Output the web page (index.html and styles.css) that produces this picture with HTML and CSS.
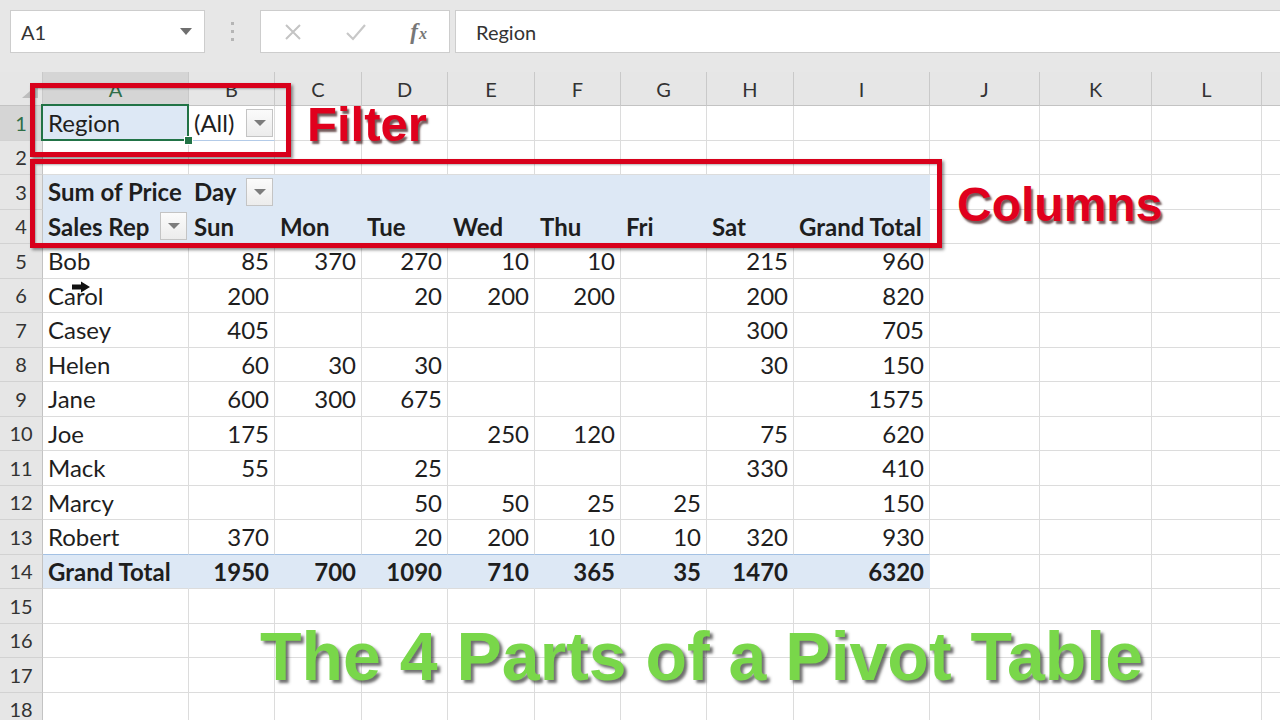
FILE: index.html
```html
<!DOCTYPE html>
<html lang="en">
<head>
<meta charset="utf-8">
<title>The 4 Parts of a Pivot Table</title>
<link rel="stylesheet" href="styles.css">
</head>
<body>
<div class="app">
  <div class="topbar">
    <div class="namebox"><span class="nb-text">A1</span><span class="caret"></span></div>
    <div class="grip"><span></span><span></span><span></span></div>
    <div class="fxbox">
      <svg class="ico" width="18" height="18" viewBox="0 0 18 18"><path d="M2 2 L16 16 M16 2 L2 16" stroke="#c4c4c4" stroke-width="2" fill="none"/></svg>
      <svg class="ico" width="22" height="18" viewBox="0 0 22 18"><path d="M2 10 L8 16 L20 2" stroke="#c8c8c8" stroke-width="2.2" fill="none"/></svg>
      <span class="fx"><i>f</i><i class="x">x</i></span>
    </div>
    <div class="formula">Region</div>
  </div>

  <div class="sheet">
    <table class="grid">
      <colgroup>
        <col class="c-rh"><col class="c-a"><col class="c-86"><col class="c-87"><col class="c-86"><col class="c-87"><col class="c-86"><col class="c-86"><col class="c-87"><col class="c-i"><col class="c-j"><col class="c-k"><col class="c-l"><col class="c-m">
      </colgroup>
      <tr class="hdr">
        <th class="corner"><svg class="selall" width="22" height="16" viewBox="0 0 22 16"><polygon points="20,1 20,15 4,15" fill="#bdbdbd"/></svg></th>
        <th class="ch sh">A</th><th class="ch">B</th><th class="ch">C</th><th class="ch">D</th><th class="ch">E</th><th class="ch">F</th><th class="ch">G</th><th class="ch">H</th><th class="ch">I</th><th class="ch">J</th><th class="ch">K</th><th class="ch">L</th><th class="ch"></th>
      </tr>
      <tr>
        <th class="rh sh">1</th>
        <td class="a1">Region<div class="sel"><span class="handle"></span></div></td>
        <td class="bline btn"><div class="cf"><span>(All)</span><span class="dd"></span></div></td>
        <td></td><td></td><td></td><td></td><td></td><td></td><td></td><td></td><td></td><td></td><td></td>
      </tr>
      <tr>
        <th class="rh">2</th>
        <td></td><td></td><td></td><td></td><td></td><td></td><td></td><td></td><td></td><td></td><td></td><td></td><td></td>
      </tr>
      <tr>
        <th class="rh">3</th>
        <td class="pv b">Sum of Price</td>
        <td class="pv b btn"><div class="cf"><span>Day</span><span class="dd"></span></div></td>
        <td class="pv"></td><td class="pv"></td><td class="pv"></td><td class="pv"></td><td class="pv"></td><td class="pv"></td><td class="pv"></td>
        <td></td><td></td><td></td><td></td>
      </tr>
      <tr>
        <th class="rh">4</th>
        <td class="pv pv4 b btn"><div class="cf"><span>Sales Rep</span><span class="dd"></span></div></td>
        <td class="pv pv4 b">Sun</td><td class="pv pv4 b">Mon</td><td class="pv pv4 b">Tue</td><td class="pv pv4 b">Wed</td><td class="pv pv4 b">Thu</td><td class="pv pv4 b">Fri</td><td class="pv pv4 b">Sat</td><td class="pv pv4 b">Grand Total</td>
        <td></td><td></td><td></td><td></td>
      </tr>
      <tr>
        <th class="rh">5</th>
        <td>Bob</td><td class="n">85</td><td class="n">370</td><td class="n">270</td><td class="n">10</td><td class="n">10</td><td class="n"></td><td class="n">215</td><td class="n">960</td>
        <td></td><td></td><td></td><td></td>
      </tr>
      <tr>
        <th class="rh">6</th>
        <td>Carol</td><td class="n">200</td><td class="n"></td><td class="n">20</td><td class="n">200</td><td class="n">200</td><td class="n"></td><td class="n">200</td><td class="n">820</td>
        <td></td><td></td><td></td><td></td>
      </tr>
      <tr>
        <th class="rh">7</th>
        <td>Casey</td><td class="n">405</td><td class="n"></td><td class="n"></td><td class="n"></td><td class="n"></td><td class="n"></td><td class="n">300</td><td class="n">705</td>
        <td></td><td></td><td></td><td></td>
      </tr>
      <tr>
        <th class="rh">8</th>
        <td>Helen</td><td class="n">60</td><td class="n">30</td><td class="n">30</td><td class="n"></td><td class="n"></td><td class="n"></td><td class="n">30</td><td class="n">150</td>
        <td></td><td></td><td></td><td></td>
      </tr>
      <tr>
        <th class="rh">9</th>
        <td>Jane</td><td class="n">600</td><td class="n">300</td><td class="n">675</td><td class="n"></td><td class="n"></td><td class="n"></td><td class="n"></td><td class="n">1575</td>
        <td></td><td></td><td></td><td></td>
      </tr>
      <tr>
        <th class="rh">10</th>
        <td>Joe</td><td class="n">175</td><td class="n"></td><td class="n"></td><td class="n">250</td><td class="n">120</td><td class="n"></td><td class="n">75</td><td class="n">620</td>
        <td></td><td></td><td></td><td></td>
      </tr>
      <tr>
        <th class="rh">11</th>
        <td>Mack</td><td class="n">55</td><td class="n"></td><td class="n">25</td><td class="n"></td><td class="n"></td><td class="n"></td><td class="n">330</td><td class="n">410</td>
        <td></td><td></td><td></td><td></td>
      </tr>
      <tr>
        <th class="rh">12</th>
        <td>Marcy</td><td class="n"></td><td class="n"></td><td class="n">50</td><td class="n">50</td><td class="n">25</td><td class="n">25</td><td class="n"></td><td class="n">150</td>
        <td></td><td></td><td></td><td></td>
      </tr>
      <tr>
        <th class="rh">13</th>
        <td class="r13">Robert</td><td class="n r13">370</td><td class="n r13"></td><td class="n r13">20</td><td class="n r13">200</td><td class="n r13">10</td><td class="n r13">10</td><td class="n r13">320</td><td class="n r13">930</td>
        <td></td><td></td><td></td><td></td>
      </tr>
      <tr>
        <th class="rh">14</th>
        <td class="pvt">Grand Total</td><td class="pvt n">1950</td><td class="pvt n">700</td><td class="pvt n">1090</td><td class="pvt n">710</td><td class="pvt n">365</td><td class="pvt n">35</td><td class="pvt n">1470</td><td class="pvt n">6320</td>
        <td></td><td></td><td></td><td></td>
      </tr>
      <tr>
        <th class="rh">15</th>
        <td></td><td></td><td></td><td></td><td></td><td></td><td></td><td></td><td></td><td></td><td></td><td></td><td></td>
      </tr>
      <tr>
        <th class="rh">16</th>
        <td></td><td></td><td></td><td></td><td></td><td></td><td></td><td></td><td></td><td></td><td></td><td></td><td></td>
      </tr>
      <tr>
        <th class="rh">17</th>
        <td></td><td></td><td></td><td></td><td></td><td></td><td></td><td></td><td></td><td></td><td></td><td></td><td></td>
      </tr>
      <tr>
        <th class="rh">18</th>
        <td></td><td></td><td></td><td></td><td></td><td></td><td></td><td></td><td></td><td></td><td></td><td></td><td></td>
      </tr>
    </table>
  </div>

  <div class="box box-filter"></div>
  <div class="box box-columns"></div>
  <div class="label label-filter">Filter</div>
  <div class="label label-columns">Columns</div>
  <div class="title">The 4 Parts of a Pivot Table</div>
  <svg class="cursor" width="20" height="12" viewBox="0 0 20 12"><path d="M1 3.5 H10 V0.5 L19 6 L10 11.5 V8.5 H1 Z" fill="#111"/></svg>
</div>
</body>
</html>
```

FILE: styles.css
```css
* { box-sizing: border-box; }
html, body { margin: 0; padding: 0; }
body {
  width: 1280px;
  height: 720px;
  overflow: hidden;
  background: #ffffff;
  font-family: "Lato", "Liberation Sans", sans-serif;
  color: #1e1e1e;
}
.app { position: relative; width: 1280px; height: 720px; overflow: hidden; }

/* ---------- formula bar ---------- */
.topbar {
  height: 72px;
  background: #e7e7e7;
  display: flex;
  align-items: flex-start;
  padding: 10px 0 0 10px;
}
.namebox {
  width: 195px;
  height: 43px;
  background: #fff;
  border: 1px solid #cdcdcd;
  display: flex;
  align-items: center;
  justify-content: space-between;
  padding: 0 12px 0 10px;
}
.nb-text { font-size: 20px; color: #333; }
.caret {
  width: 0; height: 0;
  border-left: 6px solid transparent;
  border-right: 6px solid transparent;
  border-top: 7px solid #6f6f6f;
}
.grip {
  width: 55px;
  height: 43px;
  display: flex;
  flex-direction: column;
  align-items: center;
  justify-content: center;
  gap: 5px;
}
.grip span { width: 3px; height: 3px; background: #b5b5b5; display: block; }
.fxbox {
  width: 190px;
  height: 43px;
  background: #fff;
  border: 1px solid #cdcdcd;
  display: flex;
  align-items: center;
  justify-content: space-between;
  padding: 0 22px 0 23px;
}
.fx {
  font-family: "Liberation Serif", serif;
  font-size: 23px;
  color: #777;
  font-weight: bold;
}
.fx .x { font-size: 16px; margin-left: 1px; }
.formula {
  flex: 1;
  height: 43px;
  margin-left: 5px;
  margin-right: -4px;
  background: #fff;
  border: 1px solid #cdcdcd;
  display: flex;
  align-items: center;
  padding-left: 20px;
  font-size: 20px;
  color: #333;
}

/* ---------- sheet ---------- */
.sheet { width: 1280px; height: 648px; overflow: hidden; }
.grid {
  table-layout: fixed;
  border-collapse: separate;
  border-spacing: 0;
  width: 1372px;
  font-size: 24px;
}
.c-rh { width: 43px; }
.c-a { width: 146px; }
.c-86 { width: 86px; }
.c-87 { width: 87px; }
.c-i { width: 136px; }
.c-j { width: 110px; }
.c-k { width: 112px; }
.c-l { width: 110px; }
.c-m { width: 110px; }

.hdr { height: 34px; }
tr { height: 34.5px; }

th {
  font-weight: normal;
  background: #e6e6e6;
  color: #333;
  font-size: 20px;
  line-height: 1.1;
  padding: 0;
}
.ch {
  border-right: 1px solid #c9c9c9;
  border-bottom: 1px solid #c3c3c3;
  text-align: center;
  vertical-align: middle;
}
.corner {
  border-right: 1px solid #c9c9c9;
  border-bottom: 1px solid #c3c3c3;
  text-align: right;
  vertical-align: bottom;
}
.selall { display: block; margin: 0 2px 6px auto; }
.rh {
  border-right: 1px solid #c3c3c3;
  border-bottom: 1px solid #d2d2d2;
  text-align: center;
  vertical-align: middle;
}
.sh { background: #d5d5d5; color: #2f6e48; }

td {
  border-right: 1px solid #dcdcdc;
  border-bottom: 1px solid #dcdcdc;
  padding: 0 5px;
  white-space: nowrap;
  vertical-align: middle;
  overflow: visible;
}
td.btn { padding-right: 1px; }
.cf { display: flex; align-items: center; justify-content: space-between; }
.dd {
  width: 27px;
  height: 28px;
  border: 1px solid #c4c4c4;
  background: linear-gradient(#fbfbfb, #ececec);
  display: flex;
  align-items: center;
  justify-content: center;
}
.dd::after {
  content: "";
  width: 0; height: 0;
  border-left: 6px solid transparent;
  border-right: 6px solid transparent;
  border-top: 6px solid #7c7c7c;
}
.n { text-align: right; }
.b { font-weight: bold; }

.a1 { background: #dde8f5; position: relative; }
.bline { border-bottom-color: #b3cbe8; }
.sel {
  position: absolute;
  left: -2px; top: -2px; right: -1px; bottom: -1px;
  border: 2px solid #217346;
}
.handle {
  position: absolute;
  right: -6px; bottom: -6px;
  width: 9px; height: 9px;
  background: #217346;
  border: 1px solid #fff;
}

.pv {
  background: #dde8f5;
  border-right-color: transparent;
  border-bottom-color: transparent;
}
.pv4 { border-bottom-color: #a3c1e4; }
.r13 { border-bottom-color: #a3c1e4; }
.pvt {
  background: #dde8f5;
  border-right-color: transparent;
  font-weight: bold;
}

/* ---------- annotations (overlays) ---------- */
.box {
  position: absolute;
  border: 5px solid #d8001b;
  box-shadow: 2px 2px 3px rgba(0,0,0,0.45), inset 1px 1px 2px rgba(0,0,0,0.3);
}
.box-filter { left: 30px; top: 83px; width: 261px; height: 74px; }
.box-columns { left: 30px; top: 159px; width: 912px; height: 89px; }

.label {
  position: absolute;
  font-family: "Liberation Sans", Arial, sans-serif;
  font-weight: bold;
  line-height: 0.8;
  color: #e0001d;
  text-shadow: 2px 3px 2px rgba(40,0,0,0.65);
  white-space: nowrap;
}
.label-filter { left: 307px; top: 105px; font-size: 49px; }
.label-columns { left: 957px; top: 186px; font-size: 48px; }

.title {
  position: absolute;
  left: 260px;
  top: 629px;
  font-family: "Liberation Sans", Arial, sans-serif;
  font-weight: bold;
  font-size: 68px;
  line-height: 0.8;
  color: #79d74a;
  text-shadow: 3px 3px 3px rgba(50,50,50,0.7);
  white-space: nowrap;
}
.cursor { position: absolute; left: 71px; top: 281px; }
```
